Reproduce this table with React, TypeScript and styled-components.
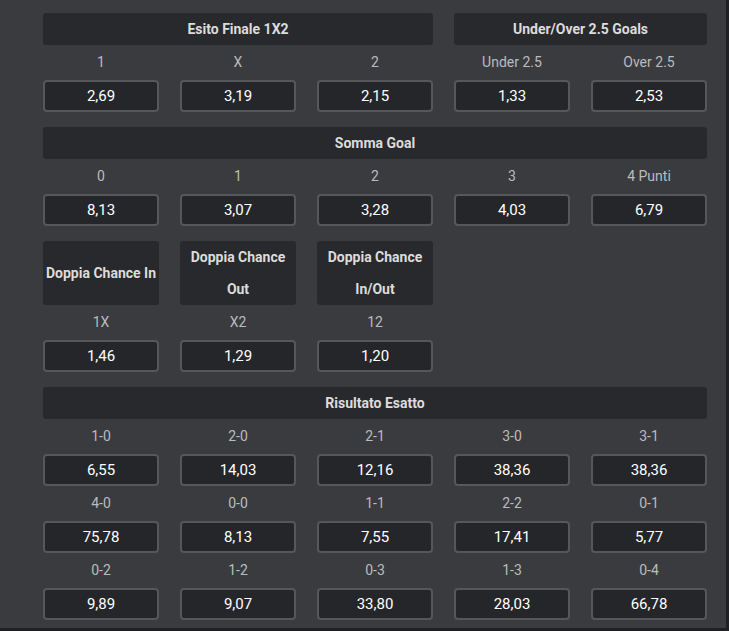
import React from "react";
import styled, { createGlobalStyle } from "styled-components";

const GlobalStyle = createGlobalStyle`
	html, body {
		margin: 0;
		padding: 0;
		background: #1f2023;
	}
	body {
		font-family: Roboto, "Liberation Sans", sans-serif;
	}
`;

interface Odd {
	label: string;
	value: string;
}

interface Section {
	headers: { title: string; span: number; tall?: boolean }[];
	odds: Odd[];
}

const sections: Section[] = [
	{
		headers: [
			{ title: "Esito Finale 1X2", span: 3 },
			{ title: "Under/Over 2.5 Goals", span: 2 },
		],
		odds: [
			{ label: "1", value: "2,69" },
			{ label: "X", value: "3,19" },
			{ label: "2", value: "2,15" },
			{ label: "Under 2.5", value: "1,33" },
			{ label: "Over 2.5", value: "2,53" },
		],
	},
	{
		headers: [{ title: "Somma Goal", span: 5 }],
		odds: [
			{ label: "0", value: "8,13" },
			{ label: "1", value: "3,07" },
			{ label: "2", value: "3,28" },
			{ label: "3", value: "4,03" },
			{ label: "4 Punti", value: "6,79" },
		],
	},
	{
		headers: [
			{ title: "Doppia Chance In", span: 1, tall: true },
			{ title: "Doppia Chance Out", span: 1, tall: true },
			{ title: "Doppia Chance In/Out", span: 1, tall: true },
		],
		odds: [
			{ label: "1X", value: "1,46" },
			{ label: "X2", value: "1,29" },
			{ label: "12", value: "1,20" },
		],
	},
	{
		headers: [{ title: "Risultato Esatto", span: 5 }],
		odds: [
			{ label: "1-0", value: "6,55" },
			{ label: "2-0", value: "14,03" },
			{ label: "2-1", value: "12,16" },
			{ label: "3-0", value: "38,36" },
			{ label: "3-1", value: "38,36" },
			{ label: "4-0", value: "75,78" },
			{ label: "0-0", value: "8,13" },
			{ label: "1-1", value: "7,55" },
			{ label: "2-2", value: "17,41" },
			{ label: "0-1", value: "5,77" },
			{ label: "0-2", value: "9,89" },
			{ label: "1-2", value: "9,07" },
			{ label: "0-3", value: "33,80" },
			{ label: "1-3", value: "28,03" },
			{ label: "0-4", value: "66,78" },
		],
	},
];

const App = () => {
	return (
		<>
			<GlobalStyle />
			<Page>
				{sections.map((section, i) => (
					<SectionGrid key={i}>
						{section.headers.map((h) => (
							<Header key={h.title} $span={h.span} $tall={h.tall}>
								{h.title}
							</Header>
						))}
						{section.headers.length < 5 && section.headers[0].span === 1 && (
							<Filler $span={5 - section.headers.length} />
						)}
						{section.odds.map((odd, j) => (
							<OddCell key={j}>
								<OddLabel>{odd.label}</OddLabel>
								<OddButton>{odd.value}</OddButton>
							</OddCell>
						))}
					</SectionGrid>
				))}
			</Page>
		</>
	);
};

const Page = styled.div`
	width: 726px;
	height: 628px;
	box-sizing: border-box;
	padding: 13px 0 0 43px;
	background: #393b3f;
	overflow: hidden;
`;

const SectionGrid = styled.div`
	display: grid;
	grid-template-columns: repeat(5, 116px);
	column-gap: 21px;
	margin-bottom: 15px;
`;

const Header = styled.div<{ $span: number; $tall?: boolean }>`
	grid-column: span ${(p) => p.$span};
	display: flex;
	align-items: center;
	justify-content: center;
	text-align: center;
	height: ${(p) => (p.$tall ? "64px" : "32px")};
	background: #28292c;
	border-radius: 3px;
	color: #dcdcdc;
	font-size: 14px;
	font-weight: 700;
	line-height: 32px;
`;

const Filler = styled.div<{ $span: number }>`
	grid-column: span ${(p) => p.$span};
`;

const OddCell = styled.div`
	display: flex;
	flex-direction: column;
`;

const OddLabel = styled.div`
	height: 35px;
	box-sizing: border-box;
	padding-bottom: 2px;
	display: flex;
	align-items: center;
	justify-content: center;
	color: #bbbcbe;
	font-size: 14px;
`;

const OddButton = styled.div`
	height: 32px;
	box-sizing: border-box;
	display: flex;
	align-items: center;
	justify-content: center;
	background: #25262a;
	border: 2px solid #55575b;
	border-radius: 4px;
	color: #ffffff;
	font-size: 15px;
	font-weight: 400;
`;

export default App;
